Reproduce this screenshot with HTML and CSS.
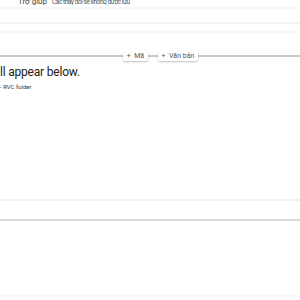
FILE: index.html
```html
<!DOCTYPE html>
<html lang="vi">
<head>
  <meta charset="UTF-8" />
  <title>Notebook</title>
  <link rel="stylesheet" href="styles.css">
</head>
<body>

  <div class="menu-bar">
    <span class="menu-item">Trợ giúp</span>
    <a class="unsaved" href="#">Các thay đổi sẽ không được lưu</a>
  </div>

  <div class="toolbar"></div>
  <div class="toolbar-bottom"></div>

  <div class="cell-gap">
    <div class="add-bar">
      <button class="add-btn code">+&nbsp;&nbsp;Mã</button>
      <button class="add-btn text">+&nbsp;&nbsp;Văn bản</button>
    </div>
  </div>

  <div class="text-cell">
    <h1>ll appear below.</h1>
    <p>- RVC folder</p>
  </div>

  <div class="code-cell">
    <div class="code-body"></div>
  </div>

  <div class="footer-line"></div>

</body>
</html>
```

FILE: styles.css
```css
body {
  margin: 0;
  font-family: Roboto, "Noto Sans", Arial, sans-serif;
  background: #fff;
  color: #212121;
}

.menu-bar {
  height: 7px;
  overflow: hidden;
  font-size: 8px;
  line-height: 8px;
  margin-top: -2px;
  padding-left: 18px;
  display: flex;
  align-items: baseline;
  gap: 5px;
  white-space: nowrap;
}

.menu-item {
  color: #444;
}

.unsaved {
  color: #555;
  font-size: 6.5px;
  text-decoration: underline;
  letter-spacing: -0.45px;
}

.toolbar {
  height: 13px;
  margin-top: 2px;
  border-top: 2px solid #f7f7f7;
}

.toolbar-bottom {
  height: 7px;
  border-top: 2px solid #f5f5f5;
  border-bottom: 2px solid #f7f7f7;
}

.cell-gap {
  height: 23px;
  display: flex;
  align-items: flex-end;
}

.add-bar {
  flex: 1;
  display: flex;
  align-items: center;
  justify-content: center;
  gap: 10px;
  height: 12px;
  margin-bottom: -6px;
  background: linear-gradient(#fff 5px, #c8c8c8 5px, #c8c8c8 7px, #fff 7px);
}

.add-btn {
  font-family: Roboto, "Noto Sans", Arial, sans-serif;
  font-size: 7px;
  color: #555;
  background: #fff;
  border: none;
  border-radius: 2px;
  box-shadow: 0 1px 2px rgba(0,0,0,0.25);
  padding: 0;
  height: 10px;
  line-height: 10px;
  margin: 0;
  text-align: center;
}

.add-btn.code {
  width: 25px;
  margin-left: 21px;
}

.add-btn.text {
  width: 40px;
}

.text-cell {
  padding-top: 8px;
}

.text-cell h1 {
  margin: 0;
  font-size: 12px;
  font-weight: 400;
  line-height: 16px;
  letter-spacing: -0.2px;
  white-space: nowrap;
}

.text-cell p {
  margin: 3px 0 0 0;
  font-size: 6px;
  line-height: 8px;
  color: #333;
}

.code-cell {
  margin-top: 108px;
  border-top: 2px solid #f0f0f0;
}

.code-body {
  height: 18px;
  border-bottom: 2px solid #dcdcdc;
}

.footer-line {
  margin-top: 74px;
  border-top: 2px solid #f8f8f8;
}
```
